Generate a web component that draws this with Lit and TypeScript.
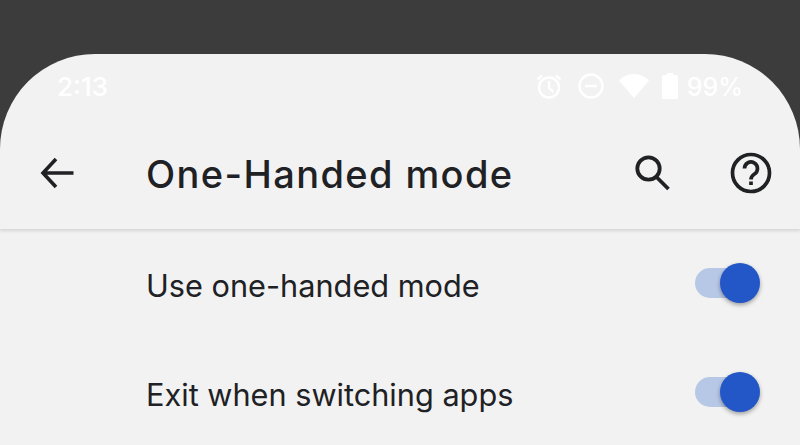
import { LitElement, html, css } from "lit";
import { customElement } from "lit/decorators.js";

@customElement("app-root")
export class AppRoot extends LitElement {
  static styles = css`
    :host { display: block; width: 800px; height: 445px; background: #3c3c3c; overflow: hidden; font-family: "Inter", "Liberation Sans", sans-serif; }
    .screen { margin-top: 54px; height: 391px; background: #f2f2f2; border-radius: 95px 95px 0 0; display: flex; flex-direction: column; overflow: hidden; box-sizing: border-box; }
    .status { height: 66px; flex: none; display: flex; align-items: flex-start; justify-content: space-between; padding: 19px 57px 0 57px; box-sizing: border-box; color: #fff; font-size: 25px; line-height: 28px; font-weight: 500; }
    .time { font-size: 26px; }
    .right { display: flex; align-items: center; }
    .right svg { display: block; flex: none; margin-top: -2px; }
    .alarm { margin-right: 16px; }
    .dnd { margin-right: 15px; }
    .wifi { margin-right: 13px; }
    .batt { margin-right: 9px; }
    .toolbar { flex: none; height: 109px; display: flex; align-items: center; padding: 0 28px 4px 40px; box-sizing: border-box; box-shadow: 0 2px 3px rgba(0,0,0,0.12); position: relative; }
    .toolbar h1 { margin: 3px 0 0 70px; flex: 1; font-size: 38px; letter-spacing: 1.4px; font-weight: 500; color: #202124; }
    .toolbar svg { display: block; flex: none; }
    .search { margin-right: 60px; }
    .row { flex: none; height: 109px; display: flex; align-items: center; justify-content: space-between; padding: 0 40px 0 146px; box-sizing: border-box; color: #202124; font-size: 30.7px; }
    .rows { padding-top: 2px; }
    .switch { display: flex; align-items: center; width: 65px; height: 40px; margin-top: -6px; }
    .track { width: 45px; height: 30px; border-radius: 15px; background: #b7c7e6; }
    .thumb { width: 40px; height: 40px; border-radius: 50%; background: #2356c6; margin-left: -20px; box-shadow: 0 2px 4px rgba(0,0,0,0.35); }
  `;

  private sw() {
    return html`<div class="switch"><div class="track"></div><div class="thumb"></div></div>`;
  }

  render() {
    return html`
      <div class="screen">
        <div class="status">
          <span class="time">2:13</span>
          <div class="right">
            <svg class="alarm" width="26" height="26" viewBox="0 0 26 26" fill="none" stroke="#fff" stroke-width="2.400">
              <circle cx="13" cy="14.500" r="10"/><path d="M13 8v7l4.500 4M1.500 6.500 6 2.500M24.500 6.500 20 2.500"/>
            </svg>
            <svg class="dnd" width="26" height="26" viewBox="0 0 26 26" fill="none" stroke="#fff" stroke-width="2.400">
              <circle cx="13" cy="13" r="11.500"/><path d="M7 13h12"/>
            </svg>
            <svg class="wifi" width="30" height="24" viewBox="0 0 30 24" fill="#fff"><path d="M0 6.500C4 2.500 9 0 15 0s11 2.500 15 6.500L15 24z"/></svg>
            <svg class="batt" width="16" height="26" viewBox="0 0 16 26" fill="#fff"><path d="M5 0h6v2h3.500Q16 2 16 3.500V24.500Q16 26 14.500 26H1.500Q0 26 0 24.500V3.500Q0 2 1.500 2H5z"/></svg>
            <span>99%</span>
          </div>
        </div>
        <div class="toolbar">
          <svg width="36" height="36" viewBox="0 0 36 36" fill="none" stroke="#202124" stroke-width="3.600"><path d="M33.500 18H5M16 4 3 18l13 14"/></svg>
          <h1>One-Handed mode</h1>
          <svg class="search" width="36" height="36" viewBox="0 0 36 36" fill="none" stroke="#202124" stroke-width="3.800"><circle cx="14.500" cy="13.500" r="11.200"/><path d="M22 21.500 34.500 34"/></svg>
          <svg width="42" height="42" viewBox="0 0 42 42" fill="none" stroke="#202124" stroke-width="3.700"><circle cx="21" cy="21" r="18.500"/><path d="M14.500 16.500a6.500 6.500 0 1 1 10 5.500c-2.300 1.500-3.500 2.800-3.500 5.500"/><path d="M21 29.500v3.500"/></svg>
        </div>
        <div class="rows">
          <div class="row"><span>Use one-handed mode</span>${this.sw()}</div>
          <div class="row"><span>Exit when switching apps</span>${this.sw()}</div>
        </div>
      </div>
    `;
  }
}
